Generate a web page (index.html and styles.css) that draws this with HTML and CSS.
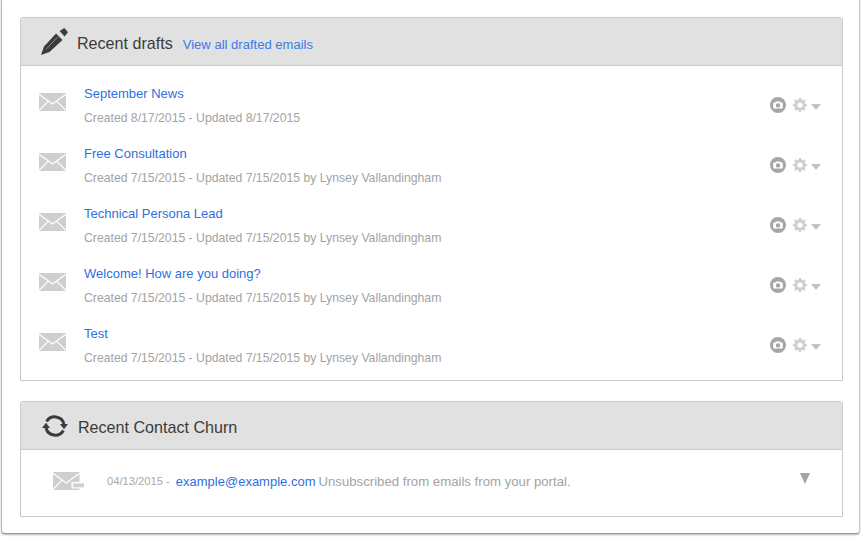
FILE: index.html
```html
<!DOCTYPE html>
<html lang="en">
<head>
<meta charset="utf-8">
<title>Dashboard</title>
<link rel="stylesheet" href="styles.css">
</head>
<body>
<svg class="defs" width="0" height="0" aria-hidden="true">
  <defs>
    <symbol id="mail" viewBox="0 0 27 18">
      <rect width="27" height="18" fill="#cfcfcf"/>
      <path d="M0 1.2 13.5 11 27 1.2M0 17.4 9.2 8.4M27 17.4 17.8 8.4" fill="none" stroke="#fff" stroke-width="1.2"/>
    </symbol>
    <symbol id="cam" viewBox="0 0 16 16">
      <path fill-rule="evenodd" d="M8 0a8 8 0 1 1 0 16A8 8 0 0 1 8 0ZM6 4.4 5.4 5.4H4a.8.8 0 0 0-.8.8v4.6a.8.8 0 0 0 .8.8h8a.8.8 0 0 0 .8-.8V6.2a.8.8 0 0 0-.8-.8h-1.4L10 4.4ZM8 6.2a2.2 2.2 0 1 1 0 4.4 2.2 2.2 0 0 1 0-4.4Z"/>
    </symbol>
    <symbol id="gear" viewBox="0 0 14 14">
      <path fill-rule="evenodd" d="M5.8 0H8.2L8.6 1.9 9.9 2.4 11.5 1.3 12.7 3 11.6 4.5 12.1 5.7 14 6V8.2L12.1 8.6 11.6 9.8 12.7 11.4 11.2 12.8 9.7 11.7 8.5 12.2 8.2 14H5.8L5.4 12.2 4.2 11.7 2.7 12.8 1.2 11.3 2.3 9.8 1.8 8.6 0 8.2V6L1.8 5.6 2.3 4.4 1.2 2.8 2.8 1.3 4.3 2.4 5.5 1.9ZM7 4.4a2.6 2.6 0 1 0 0 5.2 2.6 2.6 0 0 0 0-5.2Z"/>
    </symbol>
  </defs>
</svg>
<main class="window">
  <section class="panel">
    <header class="panel-head">
      <svg class="pencil" viewBox="0 0 27 27" aria-hidden="true">
        <path d="M0 27 3 18.5 15 5.5 21.5 12 8.5 24Z"/>
        <path d="M18.6 3 23.3 0 27 4.3 23.6 8.4Z"/>
        <path class="pencil-stripe" d="M5.5 20.8 16.5 9.2"/>
      </svg>
      <h2 class="panel-title">Recent drafts</h2>
      <a class="head-link" href="#">View all drafted emails</a>
    </header>
    <ul class="drafts">
      <li class="draft">
        <svg class="mail"><use href="#mail"/></svg>
        <div class="draft-body"><a class="link" href="#">September News</a><p class="meta">Created 8/17/2015 - Updated 8/17/2015</p></div>
        <div class="actions"><svg class="cam"><use href="#cam"/></svg><svg class="gear"><use href="#gear"/></svg><span class="caret"></span></div>
      </li>
      <li class="draft">
        <svg class="mail"><use href="#mail"/></svg>
        <div class="draft-body"><a class="link" href="#">Free Consultation</a><p class="meta">Created 7/15/2015 - Updated 7/15/2015 by Lynsey Vallandingham</p></div>
        <div class="actions"><svg class="cam"><use href="#cam"/></svg><svg class="gear"><use href="#gear"/></svg><span class="caret"></span></div>
      </li>
      <li class="draft">
        <svg class="mail"><use href="#mail"/></svg>
        <div class="draft-body"><a class="link" href="#">Technical Persona Lead</a><p class="meta">Created 7/15/2015 - Updated 7/15/2015 by Lynsey Vallandingham</p></div>
        <div class="actions"><svg class="cam"><use href="#cam"/></svg><svg class="gear"><use href="#gear"/></svg><span class="caret"></span></div>
      </li>
      <li class="draft">
        <svg class="mail"><use href="#mail"/></svg>
        <div class="draft-body"><a class="link" href="#">Welcome! How are you doing?</a><p class="meta">Created 7/15/2015 - Updated 7/15/2015 by Lynsey Vallandingham</p></div>
        <div class="actions"><svg class="cam"><use href="#cam"/></svg><svg class="gear"><use href="#gear"/></svg><span class="caret"></span></div>
      </li>
      <li class="draft">
        <svg class="mail"><use href="#mail"/></svg>
        <div class="draft-body"><a class="link" href="#">Test</a><p class="meta">Created 7/15/2015 - Updated 7/15/2015 by Lynsey Vallandingham</p></div>
        <div class="actions"><svg class="cam"><use href="#cam"/></svg><svg class="gear"><use href="#gear"/></svg><span class="caret"></span></div>
      </li>
    </ul>
  </section>
  <section class="panel panel-churn">
    <header class="panel-head">
      <svg class="sync" viewBox="0 0 26 22" aria-hidden="true">
        <path d="M4.6 6.6A9.5 9.5 0 0 1 22 9" fill="none" stroke-width="3"/>
        <path d="M21.4 15.4A9.5 9.5 0 0 1 4 13" fill="none" stroke-width="3"/>
        <path class="sync-head" d="M18 9H26L22 14.2Z"/>
        <path class="sync-head" d="M0 13H8L4 7.8Z"/>
      </svg>
      <h2 class="panel-title">Recent Contact Churn</h2>
    </header>
    <div class="churn">
      <svg class="unsub" viewBox="0 0 31 18" aria-hidden="true">
        <rect width="26.5" height="18" fill="#cfcfcf"/>
        <path d="M0 1.2 13.2 11 26.5 1.2M0 17.4 9 8.4" fill="none" stroke="#fff" stroke-width="1.2"/>
        <path d="M18.5 10H31V16.5H18.5Z" fill="#fff"/>
        <path d="M20 11.4H31V15.3H20Z" fill="#cfcfcf"/>
      </svg>
      <span class="churn-date">04/13/2015 -</span>
      <a class="link churn-mail" href="#">example@example.com</a>
      <span class="churn-text">Unsubscribed from emails from your portal.</span>
      <span class="churn-caret"></span>
    </div>
  </section>
</main>
</body>
</html>
```
FILE: styles.css
```css
* { box-sizing: border-box; }
html, body { margin: 0; height: 100%; background: #fff; }
body {
  overflow: hidden;
  font-family: "Liberation Sans", Arial, sans-serif;
  font-size: 13px;
  color: #a3a3a3;
}
.defs { display: block; height: 0; }
.window {
  width: 859px;
  height: 534px;
  margin-left: 1px;
  padding: 17px 15px 0 18px;
  background: #fff;
  border-left: 1px solid #b5b5b5;
  border-right: 1px solid #c8c8c8;
  border-bottom: 1px solid #9a9a9a;
  border-radius: 0 0 4px 4px;
  box-shadow: 0 1px 2px rgba(0, 0, 0, .3);
}
.panel {
  width: 823px;
  border: 1px solid #c9c9c9;
  border-radius: 3px 3px 0 0;
  background: #fff;
}
.panel-churn { margin-top: 20px; }
.panel-head {
  display: flex;
  align-items: center;
  height: 48px;
  background: #e1e1e1;
  border-bottom: 1px solid #c9c9c9;
}
.pencil {
  width: 27px;
  height: 27px;
  margin: 0 0 0 20px;
  fill: #3c3c3c;
  flex: none;
}
.pencil-stripe { fill: none; stroke: #8c8c8c; stroke-width: 1; }
.panel-title {
  margin: 4px 0 0;
  font-size: 16.1px;
  font-weight: 400;
  color: #3b3b3b;
}
.pencil + .panel-title { margin-left: 9px; }
.head-link {
  margin: 6px 0 0 10px;
  font-size: 13.05px;
  color: #3b7bea;
  text-decoration: none;
}
.link { color: #2f6fe0; text-decoration: none; }
.drafts { margin: 0; padding: 0 0 14px; list-style: none; }
.draft {
  display: flex;
  align-items: flex-start;
  height: 60px;
  padding: 0 21px 0 18px;
}
.mail {
  width: 27px;
  height: 18px;
  margin-top: 27px;
  flex: none;
}
.draft-body { flex: 1; margin-left: 18px; }
.draft .link { display: block; margin-top: 19px; line-height: 17px; }
.meta { margin: 8px 0 0; font-size: 12.23px; line-height: 17px; color: #a3a3a3; }
.actions { display: flex; align-items: center; margin-top: 31px; }
.cam { width: 16px; height: 16px; fill: #a6a6a6; }
.gear { width: 14px; height: 14px; margin-left: 7px; fill: #cfcfcf; }
.caret {
  width: 0;
  height: 0;
  margin: 3px 0 0 4px;
  border-left: 5.5px solid transparent;
  border-right: 5.5px solid transparent;
  border-top: 6px solid #c4c4c4;
}
.sync {
  width: 26px;
  height: 22px;
  margin-left: 21px;
  stroke: #3c3c3c;
  flex: none;
}
.sync-head { fill: #3c3c3c; stroke: none; }
.sync + .panel-title { margin-left: 10px; }
.churn {
  display: flex;
  align-items: flex-start;
  height: 66px;
  padding: 0 32px 0 32px;
}
.unsub {
  width: 31px;
  height: 18px;
  margin-top: 22px;
  flex: none;
}
.churn-date { margin: 23px 0 0 23px; font-size: 11.2px; line-height: 17px; color: #a8a8a8; }
.churn-mail { margin: 23px 0 0 6px; line-height: 17px; }
.churn-text { margin: 23px 0 0 3px; font-size: 13.2px; line-height: 17px; color: #a3a3a3; flex: 1; }
.churn-caret {
  width: 0;
  height: 0;
  margin-top: 23px;
  border-left: 5.5px solid transparent;
  border-right: 5.5px solid transparent;
  border-top: 11px solid #a3a3a3;
}
```
